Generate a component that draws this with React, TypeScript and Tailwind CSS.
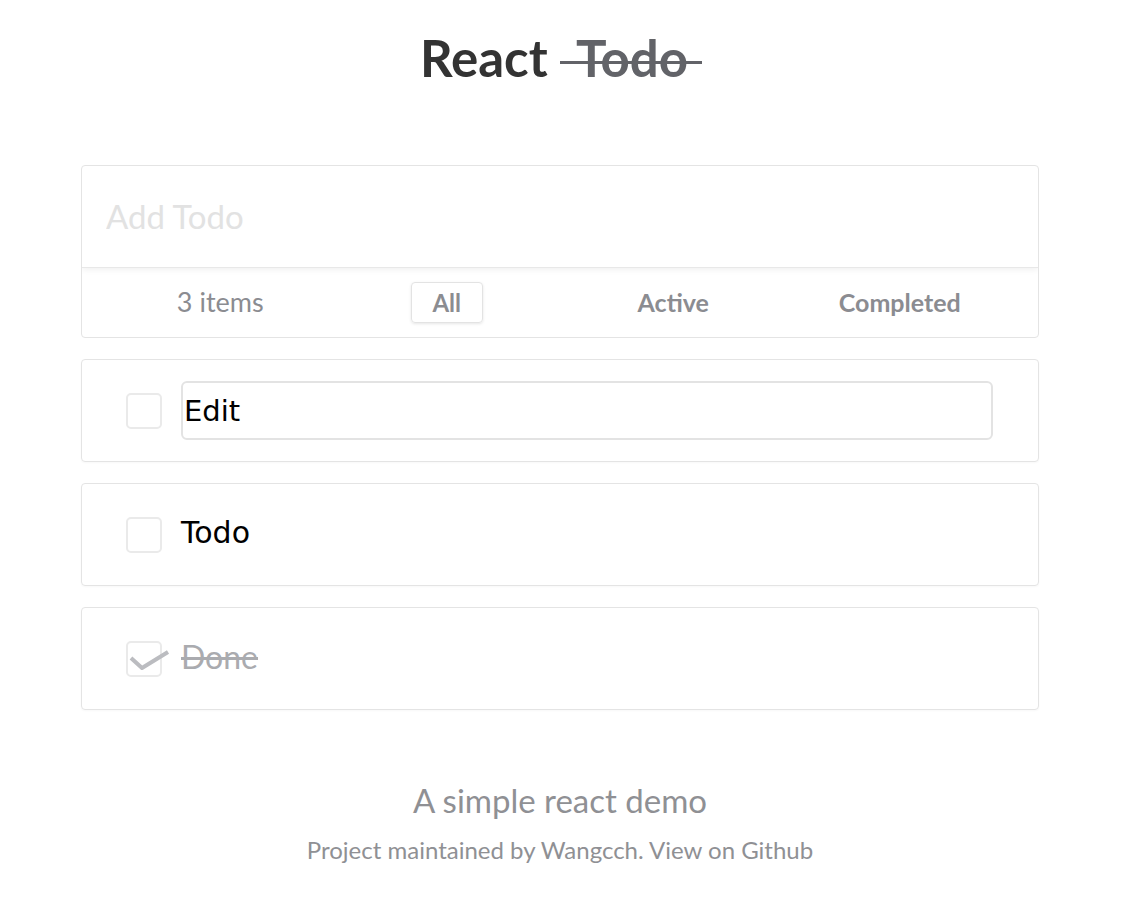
export default function App() {
  const filters = ['All', 'Active', 'Completed']

  return (
    <div className="min-h-screen bg-white font-['Lato',sans-serif] text-[#8b8c91]">
      {/* Title */}
      <div className="flex justify-center pt-[26px] h-[165px] pr-[8px]">
        <h1 className="text-[51px] leading-[64px] font-bold text-[#333] h-[64px]">
          React{' '}
          <span className="relative inline-block pl-[16px] pr-[14px] text-[#626368]">
            Todo
            <span className="absolute left-0 right-0 top-[35px] h-[3px] bg-[#626368]"></span>
          </span>
        </h1>
      </div>

      <div className="w-[958px] ml-[81px] flex flex-col gap-[21px]">
        {/* Add todo card */}
        <div className="border border-[#e4e4e4] rounded-[4px] overflow-hidden">
          <div className="h-[102px] flex items-center px-[24px] border-b border-[#e8e8e8] shadow-[0_2px_6px_rgba(0,0,0,0.06)]">
            <input
              type="text"
              placeholder="Add Todo"
              className="w-full bg-transparent outline-none text-[33px] text-[#333] placeholder:text-[#e2e2e2] font-['Lato',sans-serif]"
            />
          </div>
          <div className="h-[69px] grid grid-cols-4 items-center px-[25px]">
            <div className="text-center text-[27px]">3 items</div>
            {filters.map((f, i) => (
              <div key={f} className="flex justify-center">
                {i === 0 ? (
                  <button className="h-[41px] w-[72px] rounded-[4px] border border-[#e3e3e3] shadow-[0_1px_3px_rgba(0,0,0,0.1)] text-[24px] font-bold text-[#8b8c91]">
                    {f}
                  </button>
                ) : (
                  <button className="text-[25px] font-bold text-[#8b8c91]">{f}</button>
                )}
              </div>
            ))}
          </div>
        </div>

        {/* Editing item */}
        <div className="h-[103px] border border-[#e4e4e4] rounded-[4px] shadow-[0_1px_2px_rgba(0,0,0,0.03)] flex items-center pl-[44px] pr-[45px] gap-[19px]">
          <div className="w-[36px] h-[36px] shrink-0 border-2 border-[#eaeaea] rounded-[5px]"></div>
          <input
            type="text"
            defaultValue="Edit"
            className="flex-1 h-[59px] border-2 border-[#e3e3e3] rounded-[6px] px-[1px] outline-none text-[29px] text-black font-['DejaVu_Sans',sans-serif]"
          />
        </div>

        {/* Active item */}
        <div className="h-[103px] border border-[#e4e4e4] rounded-[4px] shadow-[0_1px_2px_rgba(0,0,0,0.03)] flex items-center pl-[44px] gap-[19px]">
          <div className="w-[36px] h-[36px] shrink-0 border-2 border-[#eaeaea] rounded-[5px]"></div>
          <span className="text-[30px] leading-[36px] pb-[4px] text-black font-['DejaVu_Sans',sans-serif]">Todo</span>
        </div>

        {/* Completed item */}
        <div className="h-[103px] border border-[#e4e4e4] rounded-[4px] shadow-[0_1px_2px_rgba(0,0,0,0.03)] flex items-center pl-[44px] gap-[19px]">
          <div className="relative w-[36px] h-[36px] shrink-0 border-2 border-[#eaeaea] rounded-[5px]">
            <svg className="absolute left-0 top-0 overflow-visible" width="44" height="30" viewBox="0 0 44 30">
              <path d="M3 15 L14 25 L40 9" fill="none" stroke="#bbbcc0" strokeWidth="4" strokeLinecap="butt" strokeLinejoin="round" />
            </svg>
          </div>
          <span className="text-[32px] leading-[36px] pb-[4px] text-[#aaabaf] line-through">Done</span>
        </div>
      </div>

      {/* Footer */}
      <div className="flex flex-col items-center pt-[70px] pr-[10px]">
        <div className="text-[33px] leading-[40px] text-[#8f9094]">A simple react demo</div>
        <div className="text-[24px] leading-[30px] mt-[15px] text-[#8f9094]">Project maintained by Wangcch. View on Github</div>
      </div>
    </div>
  )
}
